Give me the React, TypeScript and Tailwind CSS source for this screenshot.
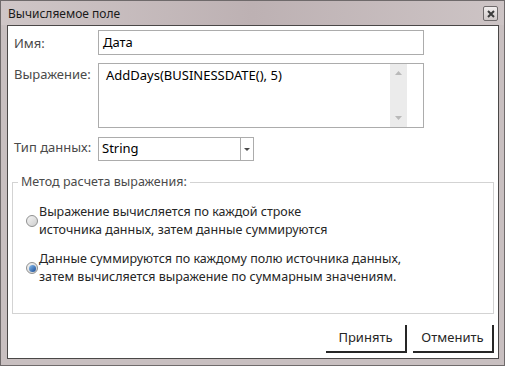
import { useState } from "react";

type RadioProps = {
  checked: boolean;
  lines: string[];
  onPick: () => void;
};

const Radio = ({ checked, lines, onPick }: RadioProps) => {
  return (
    <div className="flex items-center cursor-default" onClick={onPick}>
      <span className="w-[12px] h-[12px] ml-[13px] mr-[1px] rounded-full border border-[#8f9090] bg-gradient-to-br from-[#f4f4f4] to-[#cfcfcf] flex items-center justify-center shrink-0">
        {checked && (
          <span className="w-[7px] h-[7px] rounded-full bg-gradient-to-br from-[#8cc0f0] to-[#174a94]" />
        )}
      </span>
      <div className="text-[12.5px] leading-[18px] text-[#262626]">
        {lines.map((l) => (
          <div key={l}>{l}</div>
        ))}
      </div>
    </div>
  );
};

const App = () => {
  const [mode, setMode] = useState<number>(1);
  return (
    <div
      className="w-[505px] h-[366px] bg-[#c8bfc0] border border-[#6f6a6b] pl-[6px] pr-[5px] pb-[6px] flex flex-col"
      style={{ fontFamily: '"Noto Sans", "Open Sans", sans-serif' }}
    >
      {/* title bar */}
      <div className="h-[24px] shrink-0 flex items-center justify-between -mx-[6px] px-[7px] -mr-[5px] pr-[6px] bg-gradient-to-r from-[#cfc6c7] via-[#bdb1b3] to-[#cdc4c5]">
        <span className="text-[12px] text-[#1a1a1a] pt-[1px]">Вычисляемое поле</span>
        <span className="w-[15px] h-[15px] mt-[1px] border border-[#6f6a6b] rounded-[2px] bg-gradient-to-b from-[#f2eeee] to-[#cfc8c8] flex items-center justify-center">
          <svg width="8" height="8" viewBox="0 0 8 8">
            <path d="M1 1 L7 7 M7 1 L1 7" stroke="#3c3c3c" strokeWidth="2" />
          </svg>
        </span>
      </div>

      {/* client */}
      <div className="flex-1 bg-white border border-[#4a4747] flex flex-col text-[13px]">
        <div className="flex mt-[4px]">
          <div className="w-[90px] pl-[6px] pt-[4px] text-[#4a4a4a]">Имя:</div>
          <div className="w-[326px] h-[25px] border border-[#acacac] pl-[4px] flex items-center text-black">
            Дата
          </div>
        </div>

        <div className="flex mt-[8px]">
          <div className="w-[90px] pl-[6px] pt-[2px] text-[#4a4a4a]">Выражение:</div>
          <div className="w-[326px] h-[65px] border border-[#acacac] flex">
            <div className="w-[291px] pl-[7px] pt-[2px] text-black">
              AddDays(BUSINESSDATE(), 5)
            </div>
            <div className="w-[17px] bg-[#ebebeb] flex flex-col items-center justify-between py-[7px]">
              <svg width="7" height="4" viewBox="0 0 7 4">
                <path d="M0 4 L3.5 0 L7 4 Z" fill="#b9b9b9" />
              </svg>
              <svg width="7" height="4" viewBox="0 0 7 4">
                <path d="M0 0 L3.5 4 L7 0 Z" fill="#b9b9b9" />
              </svg>
            </div>
          </div>
        </div>

        <div className="flex mt-[9px]">
          <div className="w-[90px] pl-[6px] pt-[1px] text-[#4a4a4a]">Тип данных:</div>
          <div className="w-[156px] h-[24px] border border-[#acacac] flex">
            <div className="flex-1 pl-[3px] flex items-center text-black">String</div>
            <div className="w-[13px] border-l border-[#acacac] flex items-center justify-center">
              <svg width="6" height="3" viewBox="0 0 6 3">
                <path d="M0 0 L3 3 L6 0 Z" fill="#4a4a4a" />
              </svg>
            </div>
          </div>
        </div>

        {/* group box */}
        <div className="relative mt-[21px] mx-[4px] h-[132px] border border-[#d3d3d3] pt-[20px] flex flex-col gap-[11px]">
          <span className="absolute -top-[10px] left-[5px] px-[3px] bg-white text-[12.5px] text-[#4a4a4a] leading-[18px]">
            Метод расчета выражения:
          </span>
          <Radio
            checked={mode === 0}
            onPick={() => setMode(0)}
            lines={["Выражение вычисляется по каждой строке", "источника данных, затем данные суммируются"]}
          />
          <Radio
            checked={mode === 1}
            onPick={() => setMode(1)}
            lines={[
              "Данные суммируются по каждому полю источника данных,",
              "затем вычисляется выражение по суммарным значениям.",
            ]}
          />
        </div>

        <div className="flex justify-end gap-[6px] mt-[11px] mr-[4px]">
          <button className="w-[81px] h-[28px] border-r-2 border-b-2 border-[#262626] text-[#262626]">
            Принять
          </button>
          <button className="w-[81px] h-[28px] border-r-2 border-b-2 border-[#262626] text-[#262626]">
            Отменить
          </button>
        </div>
      </div>
    </div>
  );
};

export default App;
